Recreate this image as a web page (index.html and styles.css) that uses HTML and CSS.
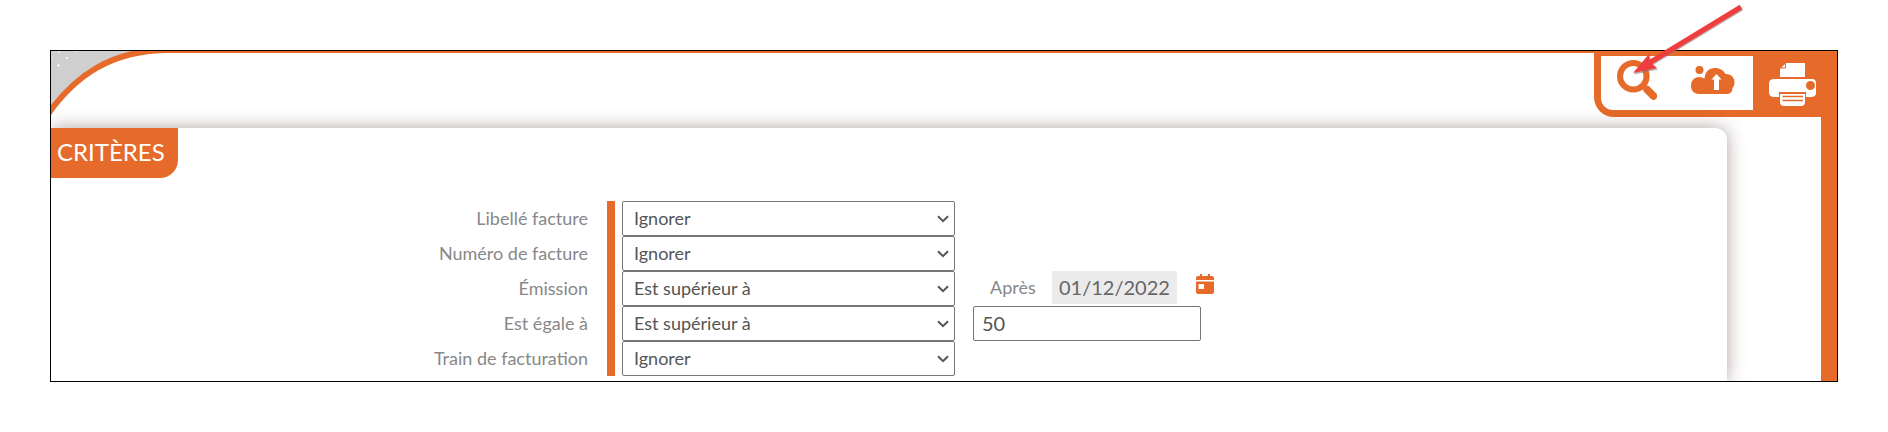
FILE: index.html
```html
<!DOCTYPE html>
<html lang="fr">
<head>
<meta charset="utf-8">
<title>Critères</title>
<link rel="stylesheet" href="styles.css">
</head>
<body>
<svg class="defs" aria-hidden="true"><symbol id="chevron" viewBox="0 0 12 8"><path d="M1 1.2l5 5 5-5" fill="none" stroke="#555" stroke-width="2"/></symbol></svg>
<main class="frame">
  <svg class="corner" viewBox="0 0 130 64" aria-hidden="true">
    <path d="M0 0H100C52 4 22 28 0 58Z" fill="#cfcfcf"/>
    <path d="M-3 63C24 25 60 -1 118 -1H130" fill="none" stroke="#e66b2a" stroke-width="6"/>
    <g fill="#fff"><circle cx="16" cy="7" r="1"/><circle cx="7.500" cy="14.500" r="1.200"/><circle cx="8" cy="1" r=".9"/><circle cx="25" cy="0.500" r=".7"/><circle cx="1.500" cy="7" r=".6"/></g>
  </svg>
  <svg class="arrow" viewBox="0 0 112 76" aria-hidden="true">
    <g fill="#8d7770" stroke="#8d7770" opacity=".6" transform="translate(1 1.500)"><path d="M108 6L16 62" stroke-width="4"/><path d="M0 72L16 53L17 61L24 67Z" stroke="none"/></g>
    <path d="M108 6L16 62" stroke="#f03e3e" stroke-width="5"/>
    <path d="M0 72L16 53L17 61L24 67Z" fill="#f03e3e"/>
  </svg>
  <header class="topbar">
    <nav class="tools">
      <div class="tools-light">
        <button class="tool" type="button" aria-label="Rechercher">
          <svg width="40" height="40" viewBox="0 0 40 40"><circle cx="16.300" cy="16.300" r="13.300" fill="none" stroke="#e66b2a" stroke-width="6"/><path d="M26 26L30 30" stroke="#e66b2a" stroke-width="4"/><path d="M30 29.500L36.500 36" stroke="#e66b2a" stroke-width="7.500" stroke-linecap="round"/></svg>
        </button>
        <button class="tool" type="button" aria-label="Envoyer">
          <svg width="44" height="28" viewBox="0 0 44 28"><g fill="#e66b2a"><circle cx="8.500" cy="4" r="4"/><path d="M8 28C2.500 28 0 24 0 20C0 14 4 11 8 11Q11 11 13.500 12.500C14 6 18 2 24 2C29 2 32.500 4.500 34.500 8C40 7.500 43.500 11.500 43.500 16C43.500 18.500 43 20.500 41.500 22C41.500 26 39 28 35 28Z"/></g><path d="M25.500 8l5 5.500h-2.500V24h-5V13.500h-2.500z" fill="#fff"/></svg>
        </button>
      </div>
      <button class="print" type="button" aria-label="Imprimer">
        <svg width="48" height="44" viewBox="0 0 48 44"><g fill="#fff"><path d="M17 0H36V14H11V6Z"/><path d="M5 16H43Q47 16 47 20V30Q47 34 42 34H37V29H10V34H5Q0 34 0 29V21Q0 16 5 16Z"/><path d="M11 31H36V39Q36 43 32 43H15Q11 43 11 39Z"/></g><g stroke="#e66b2a" fill="none"><path d="M16.500 0V5H11" /><path d="M13.500 33.500H34M13.500 37.500H34" stroke-width="1.500"/></g><circle cx="41.500" cy="22.500" r="4.500" fill="#e66b2a"/></svg>
      </button>
    </nav>
  </header>
  <section class="panel">
    <h1 class="tab">CRITÈRES</h1>
    <form class="criteria">
      <div class="labels">
        <label for="libelle">Libellé facture</label>
        <label for="numero">Numéro de facture</label>
        <label for="emission">Émission</label>
        <label for="egale">Est égale à</label>
        <label for="train">Train de facturation</label>
      </div>
      <div class="selects">
        <div class="select"><select id="libelle"><option>Ignorer</option></select><svg class="chevron"><use href="#chevron"/></svg></div>
        <div class="select"><select id="numero"><option>Ignorer</option></select><svg class="chevron"><use href="#chevron"/></svg></div>
        <div class="select"><select id="emission"><option>Est supérieur à</option></select><svg class="chevron"><use href="#chevron"/></svg></div>
        <div class="select"><select id="egale"><option>Est supérieur à</option></select><svg class="chevron"><use href="#chevron"/></svg></div>
        <div class="select"><select id="train"><option>Ignorer</option></select><svg class="chevron"><use href="#chevron"/></svg></div>
      </div>
      <div class="values">
        <div class="date-row">
          <label for="date">Après</label>
          <input class="date" id="date" type="text" value="01/12/2022" readonly>
          <button class="calendar" type="button" aria-label="Calendrier">
            <svg width="18" height="20" viewBox="0 0 18 20"><path d="M0 6V4Q0 2 2 2H4V0H6V2H12V0H14V2H16Q18 2 18 4V6ZM0 7.500H18V18Q18 20 16 20H2Q0 20 0 18Z" fill="#e66b2a"/><path d="M2.500 10H8V15H2.500Z" fill="#fff"/></svg>
          </button>
        </div>
        <input class="amount" type="text" value="50" aria-label="Valeur">
      </div>
    </form>
  </section>
</main>
</body>
</html>
```
FILE: styles.css
```css
* { box-sizing: border-box; }

body {
  margin: 0;
  padding: 50px;
  background: #fff;
  color: #555;
  font-family: Lato, "Liberation Sans", sans-serif;
  font-size: 18px;
}

button, input, select { font: inherit; color: inherit; margin: 0; }
button { display: flex; align-items: center; justify-content: center; padding: 0; border: 0; background: none; cursor: pointer; }
svg { display: block; flex: none; }
.defs { position: absolute; width: 0; height: 0; }

.frame {
  position: relative;
  border: 1px solid #000;
  background: linear-gradient(#e66b2a, #e66b2a) right / 16px 100% no-repeat;
}

.corner { position: absolute; left: 0; top: 0; width: 130px; height: 64px; overflow: hidden; }

.arrow {
  position: absolute;
  right: 92px;
  top: -50px;
  width: 112px;
  height: 76px;
  z-index: 2;
  pointer-events: none;
}

.topbar {
  display: flex;
  justify-content: flex-end;
  height: 77px;
  border-top: 2px solid #e66b2a;
}

.tools {
  display: flex;
  height: 64px;
  padding: 3px 0 7px 7px;
  background: #e66b2a;
  border-bottom-left-radius: 20px;
}

.tools-light {
  display: flex;
  align-items: center;
  gap: 34px;
  padding: 0 18px 7px 16px;
  background: #fff;
  border-bottom-left-radius: 12px;
}

.print { width: 84px; padding: 4px 5px 0 0; }

.panel {
  margin-right: 110px;
  background: #fff;
  border-top-right-radius: 12px;
  box-shadow: 0 0 18px rgba(80, 50, 45, .45);
  clip-path: inset(-20px -24px 0 0);
}

.tab {
  width: max-content;
  height: 50px;
  margin: 0;
  padding: 0 13px 0 6px;
  border-bottom-right-radius: 18px;
  background: #e66b2a;
  color: #fff;
  font-size: 24px;
  font-weight: 400;
  line-height: 48px;
}

.criteria { display: flex; padding: 23px 0 5px; }

.labels {
  display: flex;
  flex-direction: column;
  width: 564px;
  flex: 0 1 auto;
  padding-right: 19px;
  margin-right: 7px;
  border-right: 8px solid #e66b2a;
  color: #888;
  line-height: 35px;
  text-align: right;
}

.select { position: relative; width: 333px; }

.select select {
  display: block;
  width: 100%;
  height: 35px;
  padding: 0 30px 2px 11px;
  border: 1px solid #767676;
  border-radius: 2px;
  background: #fff;
  appearance: none;
}

.chevron {
  position: absolute;
  right: 6px;
  top: 14px;
  width: 12px;
  height: 8px;
  pointer-events: none;
}

.values { padding: 70px 0 0 18px; }

.date-row {
  display: flex;
  align-items: flex-start;
  width: 241px;
  height: 35px;
  padding-left: 17px;
  color: #888;
  line-height: 32px;
}

.date {
  width: 125px;
  height: 33px;
  margin-left: auto;
  padding: 0 7px 2px;
  border: 0;
  background: #ebebeb;
  color: #666;
  font-size: 20px;
}

.calendar { width: 18px; height: 20px; margin: 3px 0 0 19px; }

.amount {
  display: block;
  width: 228px;
  height: 35px;
  padding: 0 8px 2px;
  border: 1px solid #767676;
  border-radius: 2px;
  font-size: 20px;
}
```
